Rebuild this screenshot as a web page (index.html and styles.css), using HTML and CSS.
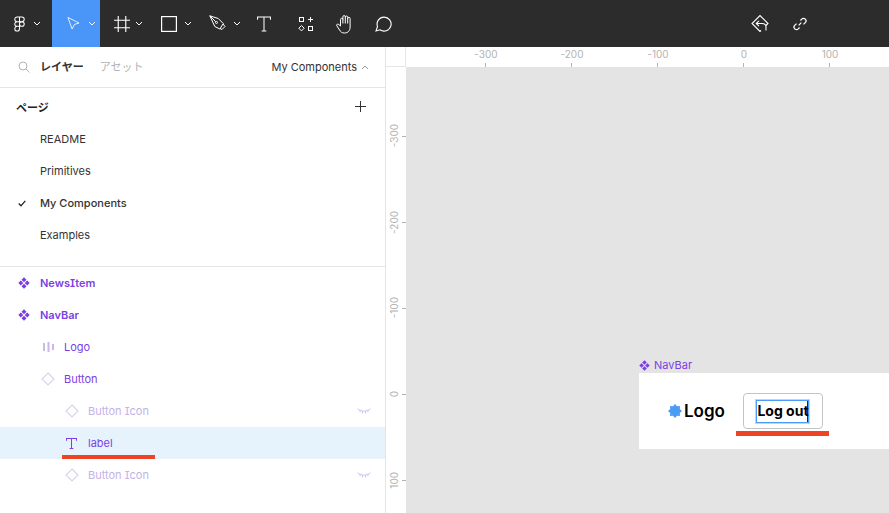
FILE: index.html
```html
<!DOCTYPE html>
<html lang="ja">

<head>
    <meta charset="UTF-8">
    <title>My Components - Figma</title>
    <link rel="stylesheet" href="styles.css">
</head>

<body>
    <svg class="defs" width="0" height="0">
        <symbol id="chev" viewBox="0 0 8 5"><path d="M1 1l3 3 3-3" fill="none" stroke="currentColor" stroke-width="1"/></symbol>
        <symbol id="comp" viewBox="0 0 12 12"><path fill="currentColor" d="M6 .3L8.500 2.800 6 5.300 3.500 2.800zM2.800 3.500L5.300 6 2.800 8.500.3 6zM9.200 3.500L11.700 6 9.200 8.500 6.700 6zM6 6.700L8.500 9.200 6 11.700 3.500 9.200z"/></symbol>
        <symbol id="diamond" viewBox="0 0 14 14"><path fill="none" stroke="currentColor" stroke-width="1.200" d="M7 1l6 6-6 6-6-6z"/></symbol>
        <symbol id="eye" viewBox="0 0 14 6"><path fill="none" stroke="currentColor" stroke-width=".7" d="M.5.800L3 2.300M13.500.800L11 2.300M3 2C5.500 3.600 8.500 3.600 11 2M5.500 3.200v2.300M8.500 3.200v2.300M3 2.300v2M11 2.300v2"/></symbol>
    </svg>

    <header class="toolbar">
        <div class="tool tool-logo">
            <svg width="11" height="16" viewBox="0 0 14 20" fill="none" stroke="#fff" stroke-width="1.300"><path d="M7 1H4a3 3 0 0 0 0 6h3zM7 1h3a3 3 0 0 1 0 6H7zM7 7H4a3 3 0 0 0 0 6h3zM7 13H4a3 3 0 1 0 3 3z"/><circle cx="10" cy="10" r="3"/></svg>
            <svg class="chev"><use href="#chev"/></svg>
        </div>
        <div class="tool tool-active">
            <svg width="13" height="15" viewBox="0 0 14 15" fill="none" stroke="#fff" stroke-width=".9"><path d="M1 1l12 6-5 1.500-2.500 5z"/></svg>
            <svg class="chev"><use href="#chev"/></svg>
        </div>
        <div class="tool tool-frame">
            <svg width="16" height="16" viewBox="0 0 17 17" fill="none" stroke="#fff" stroke-width="1.200"><path d="M4.500 0v17M12.500 0v17M0 4.500h17M0 12.500h17"/></svg>
            <svg class="chev"><use href="#chev"/></svg>
        </div>
        <div class="tool">
            <svg width="16" height="16" viewBox="0 0 16 16" fill="none" stroke="#fff" stroke-width="1.200"><rect x=".6" y=".6" width="14.800" height="14.800"/></svg>
            <svg class="chev"><use href="#chev"/></svg>
        </div>
        <div class="tool">
            <svg width="17" height="17" viewBox="0 0 17 17" fill="none" stroke="#fff"><path d="M.8.800l8.500 2.700 5 5-3.500 5.500-5-2.500zM.8.800l6 6M14 9l2 2.500-3 3-2-1"/><circle cx="7.500" cy="7.500" r="1"/></svg>
            <svg class="chev"><use href="#chev"/></svg>
        </div>
        <div class="tool tool-text">
            <svg width="14" height="16" viewBox="0 0 15 16" fill="none" stroke="#fff" stroke-width="1.100"><path d="M.6 3.500V.6h13.800v2.900M7.500.6v14.800M5 15.400h5"/></svg>
        </div>
        <div class="tool tool-shapes">
            <svg width="16" height="16" viewBox="0 0 16 16" fill="none" stroke="#fff"><rect x="1.500" y="1.500" width="4" height="4"/><rect x="10.500" y="10.500" width="4" height="4"/><path d="M12.500 1v5M10 3.500h5M3.500 9.500l2.700 2.700-2.700 2.700L.8 12.200z"/></svg>
        </div>
        <div class="tool tool-hand">
            <svg width="18" height="20" viewBox="0 0 16 20" fill="none" stroke="#fff"><path d="M4.500 12V5.500a1.200 1.200 0 0 1 2.400 0M6.900 9.500V2.800a1.200 1.200 0 0 1 2.400 0v6.700M9.300 3.200a1.200 1.200 0 0 1 2.400 0v6.300M11.700 4.500a1.200 1.200 0 0 1 2.400 0V13c0 3.500-2 6-5.500 6-3 0-4-1.200-5-3L.8 11.800c-.7-1.400 1-2.300 2-1.300L4.500 12"/></svg>
        </div>
        <div class="tool tool-bubble">
            <svg width="17" height="17" viewBox="0 0 17 17" fill="none" stroke="#fff" stroke-width="1.100"><path d="M1 16l1.500-4.500A7 7 0 1 1 5 14.800z"/></svg>
        </div>
        <div class="toolbar-actions">
            <svg width="18" height="20" viewBox="0 0 18 20" fill="none" stroke="#fff" stroke-width="1.100"><path d="M14.500 12L17 9.500 9 1.500 1 9.500l8 8 1-1M5.500 9.500H11c2.500 0 4 1.500 4 3.500v3.500M8 6.800L5.200 9.500 8 12.200"/></svg>
            <svg width="14" height="14" viewBox="0 0 16 16" fill="none" stroke="#fff" stroke-width="1.400"><path d="M6.500 9.500l3-3M8.500 4l1.500-1.500a2.800 2.800 0 0 1 4 4L12 8.500M7.500 12L6 13.500a2.800 2.800 0 0 1-4-4L4 7.500"/></svg>
        </div>
    </header>

    <main class="workspace">
        <aside class="sidebar">
            <div class="tabs">
                <svg class="search" width="12" height="12" viewBox="0 0 12 12" fill="none" stroke="#b3b3b3"><circle cx="5" cy="5" r="4"/><path d="M8 8l3.500 3.500"/></svg>
                <span class="tab tab-on">レイヤー</span>
                <span class="tab">アセット</span>
                <span class="page-select">My Components <svg class="chev-up" width="8" height="5"><use href="#chev"/></svg></span>
            </div>

            <section class="pages">
                <div class="pages-head">
                    <span>ページ</span>
                    <svg width="11" height="11" viewBox="0 0 11 11" stroke="#333"><path d="M5.500 0v11M0 5.500h11"/></svg>
                </div>
                <div class="page">README</div>
                <div class="page">Primitives</div>
                <div class="page page-on">
                    <svg class="check" width="8" height="7" viewBox="0 0 8 7" fill="none" stroke="#222" stroke-width="1.300"><path d="M.7 3.500l2.300 2.300L7.300.8"/></svg>
                    My Components
                </div>
                <div class="page">Examples</div>
            </section>

            <section class="layers">
                <div class="layer layer-top"><svg class="ico-comp"><use href="#comp"/></svg>NewsItem</div>
                <div class="layer layer-top"><svg class="ico-comp"><use href="#comp"/></svg>NavBar</div>
                <div class="layer depth-1">
                    <svg class="ico-logo" width="11" height="10" viewBox="0 0 11 10"><path d="M0 1h2v8H0zM4.500 0h2v10h-2zM9 2h2v6H9z" fill="#c9b8e8"/></svg>Logo
                </div>
                <div class="layer depth-1"><svg class="ico-diamond"><use href="#diamond"/></svg>Button</div>
                <div class="layer depth-2 layer-off"><svg class="ico-diamond"><use href="#diamond"/></svg>Button Icon<svg class="eye"><use href="#eye"/></svg></div>
                <div class="layer depth-2 layer-sel">
                    <svg class="ico-text" width="11" height="11" viewBox="0 0 12 12" fill="none" stroke="#7b3fe4" stroke-width="1.100"><path d="M.5 3V.5h11V3M6 .5v11M4 11.500h4"/></svg>label
                    <span class="mark mark-layer"></span>
                </div>
                <div class="layer depth-2 layer-off"><svg class="ico-diamond"><use href="#diamond"/></svg>Button Icon<svg class="eye"><use href="#eye"/></svg></div>
            </section>
        </aside>

        <div class="stage">
            <div class="ruler-corner"></div>
            <div class="ruler ruler-x">
                <div class="tick">-300</div>
                <div class="tick">-200</div>
                <div class="tick">-100</div>
                <div class="tick">0</div>
                <div class="tick">100</div>
            </div>
            <div class="ruler ruler-y">
                <div class="tick"><span>-300</span></div>
                <div class="tick"><span>-200</span></div>
                <div class="tick"><span>-100</span></div>
                <div class="tick"><span>0</span></div>
                <div class="tick"><span>100</span></div>
            </div>
            <div class="canvas">
                <div class="frame-title"><svg width="11" height="11"><use href="#comp"/></svg>NavBar</div>
                <div class="frame">
                    <svg class="brand" width="14" height="14" viewBox="0 0 14 14"><path fill="#4a9cf6" d="M14 7l-2.200 2 .15 2.950L9 11.800 7 14l-2-2.200-2.950.15L2.200 9 0 7l2.200-2-.15-2.950L5 2.200 7 0l2 2.200 2.950-.15L11.800 5z"/></svg>
                    <span class="brand-name">Logo</span>
                    <div class="btn"><span class="btn-label">Log out</span></div>
                    <span class="mark mark-btn"></span>
                </div>
            </div>
        </div>
    </main>
</body>

</html>
```

FILE: styles.css
```css
* {
    margin: 0;
    padding: 0;
    box-sizing: border-box;
}

html,
body {
    width: 889px;
    height: 513px;
    overflow: hidden;
}

body {
    display: flex;
    flex-direction: column;
    background: #fff;
    color: #333;
    font-family: "Inter", "Noto Sans CJK JP", sans-serif;
    font-size: 11px;
    font-feature-settings: "cv08";
}

.defs {
    position: absolute;
}

svg {
    display: block;
    flex-shrink: 0;
}

/* toolbar */
.toolbar {
    display: flex;
    align-items: center;
    height: 47px;
    background: #2c2c2c;
    color: #fff;
}

.tool {
    display: flex;
    align-items: center;
    gap: 7px;
    width: 48px;
    height: 47px;
    padding-left: 13px;
}

.tool-logo {
    width: 52px;
    padding-left: 14px;
    gap: 8px;
}

.tool-active {
    background: #4a96f8;
    gap: 8px;
    padding-left: 15px;
}

.tool-frame {
    padding-left: 14px;
    gap: 5px;
}

.tool-text,
.tool-shapes,
.tool-hand,
.tool-bubble {
    justify-content: center;
    padding-left: 0;
}

.tool-text {
    width: 39px;
}

.tool-shapes {
    width: 45px;
}

.tool-hand {
    width: 31px;
}

.chev {
    width: 8px;
    height: 5px;
}

.toolbar-actions {
    display: flex;
    align-items: center;
    gap: 24px;
    margin-left: 344px;
}

/* left panel */
.workspace {
    display: flex;
    flex: 1;
    min-height: 0;
}

.sidebar {
    display: flex;
    flex-direction: column;
    width: 386px;
    border-right: 1px solid #e5e5e5;
}

.tabs {
    display: flex;
    align-items: center;
    height: 41px;
    padding: 0 16px 0 18px;
    border-bottom: 1px solid #e5e5e5;
}

.search {
    margin-right: 11px;
}

.tab {
    margin: -2px 16px 0 0;
    color: #b3b3b3;
    font-size: 11px;
}

.tab-on {
    margin-left: -1px;
    color: #333;
    font-weight: 700;
}

.page-select {
    display: flex;
    align-items: center;
    gap: 4px;
    margin-left: auto;
    color: #333;
}

.chev-up {
    color: #999;
    transform: rotate(180deg);
}

.pages {
    height: 179px;
    border-bottom: 1px solid #e5e5e5;
}

.pages-head {
    display: flex;
    align-items: center;
    justify-content: space-between;
    height: 35px;
    padding: 2px 19px 0 16px;
    font-weight: 700;
    color: #222;
}

.page {
    display: flex;
    align-items: center;
    height: 32px;
    padding-left: 40px;
    position: relative;
    color: #333;
}

.page-on {
    font-weight: 500;
}

.check {
    position: absolute;
    left: 18px;
    top: 13px;
}

.layer {
    display: flex;
    align-items: center;
    position: relative;
    height: 32px;
    color: #7b3fe4;
}

.layer-top {
    padding-left: 18px;
    font-weight: 600;
}

.ico-comp {
    width: 12px;
    height: 12px;
    margin-right: 10px;
}

.depth-1 {
    padding-left: 41px;
}

.depth-2 {
    padding-left: 65px;
}

.ico-diamond {
    width: 14px;
    height: 14px;
    margin-right: 9px;
    color: #d9d4ec;
}

.depth-1 .ico-logo {
    margin-right: 10px;
    margin-left: 2px;
}

.ico-text {
    margin-left: 1px;
    margin-right: 11px;
}

.layer-off {
    color: #c5b2e6;
}

.layer-sel {
    background: #e6f3fd;
}

.eye {
    width: 14px;
    height: 6px;
    margin-left: auto;
    margin-right: 14px;
    color: #bfa9e6;
}

/* red underlines drawn over the screenshot */
.mark {
    position: absolute;
    background: #ee4423;
}

.mark-layer {
    left: 62px;
    top: 28px;
    width: 93px;
    height: 4px;
}

.mark-btn {
    left: 97px;
    top: 58px;
    width: 93px;
    height: 5px;
}

/* canvas and rulers */
.stage {
    display: grid;
    grid-template-columns: 20px 1fr;
    grid-template-rows: 20px 1fr;
    flex: 1;
    min-width: 0;
}

.ruler-corner {
    border-right: 1px solid #e5e5e5;
    border-bottom: 1px solid #e5e5e5;
}

.ruler {
    overflow: hidden;
    color: #b3b3b3;
    font-size: 10px;
}

.ruler-x {
    display: flex;
    padding-left: 37px;
}

.ruler-x .tick {
    position: relative;
    flex: 0 0 86px;
    height: 20px;
    padding-top: 1px;
    text-align: center;
    line-height: 12px;
}

.ruler-x .tick::after {
    content: "";
    position: absolute;
    left: 42px;
    bottom: 0;
    width: 1px;
    height: 4px;
    background: #b3b3b3;
}

.ruler-y {
    padding-top: 26px;
}

.ruler-y .tick {
    display: flex;
    align-items: center;
    justify-content: center;
    position: relative;
    height: 86px;
    padding-right: 5px;
}

.ruler-y .tick span {
    writing-mode: vertical-rl;
    transform: rotate(180deg);
    line-height: 12px;
}

.ruler-y .tick::after {
    content: "";
    position: absolute;
    right: 0;
    top: 43px;
    width: 4px;
    height: 1px;
    background: #b3b3b3;
}

.canvas {
    position: relative;
    background: #e4e4e4;
    overflow: hidden;
}

.frame-title {
    display: flex;
    align-items: center;
    gap: 4px;
    position: absolute;
    left: 233px;
    top: 292px;
    color: #7b3fe4;
    font-size: 11px;
    line-height: 12px;
}

.frame {
    display: flex;
    align-items: center;
    position: absolute;
    left: 233px;
    top: 306px;
    width: 260px;
    height: 76px;
    padding-left: 29px;
    background: #fff;
}

.brand {
    margin-right: 2px;
}

.brand-name {
    color: #000;
    font-size: 17px;
    font-weight: 600;
}

.btn {
    display: flex;
    align-items: center;
    justify-content: center;
    width: 80px;
    height: 36px;
    margin-left: 18px;
    border: 1px solid #c4c4c4;
    border-radius: 4px;
}

.btn-label {
    width: 53px;
    height: 23px;
    border: 1px solid #4a9cf6;
    box-shadow: 0 0 0 1px rgba(74, 156, 246, 0.4), inset -1px 0 0 #16304f;
    color: #000;
    font-size: 14px;
    font-weight: 700;
    line-height: 20px;
    text-align: center;
    white-space: nowrap;
}
```
